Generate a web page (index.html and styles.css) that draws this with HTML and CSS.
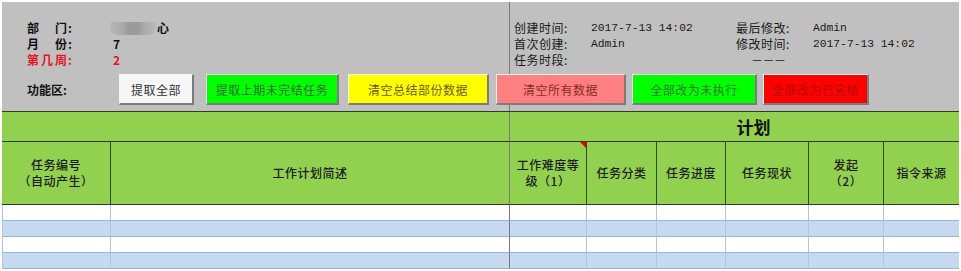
FILE: index.html
```html
<!DOCTYPE html>
<html lang="zh-CN">
<head>
<meta charset="utf-8">
<title>工作计划</title>
<link rel="stylesheet" href="styles.css">
</head>
<body>
<div class="sheet">
  <div class="top">
    <div class="info">
      <div class="meta">
        <div class="row"><span class="k"><span class="kn">部 门</span>:</span><span class="v"><span class="blur"></span>心</span></div>
        <div class="row"><span class="k"><span class="kn">月 份</span>:</span><span class="v">7</span></div>
        <div class="row red"><span class="k"><span class="kn">第几周</span>:</span><span class="v">2</span></div>
      </div>
      <div class="stamp">
        <span class="sk">创建时间:</span><span class="sv mono">2017-7-13 14:02</span><span class="sk">最后修改:</span><span class="sv mono">Admin</span>
        <span class="sk">首次创建:</span><span class="sv mono">Admin</span><span class="sk">修改时间:</span><span class="sv mono">2017-7-13 14:02</span>
        <span class="sk">任务时段:</span><span class="sv"></span><span class="sk dash">－－－</span><span class="sv"></span>
      </div>
    </div>
    <div class="tools">
      <span class="tk">功能区:</span>
      <div class="btn b1">提取全部</div>
      <div class="btn b2">提取上期未完结任务</div>
      <div class="btn b3">清空总结部份数据</div>
      <div class="btn b4">清空所有数据</div>
      <div class="btn b5">全部改为未执行</div>
      <div class="btn b6">全部改为已完结</div>
    </div>
  </div>
  <div class="grid">
    <div class="band band-l"></div>
    <div class="band band-r">计划</div>

    <div class="h">任务编号<br>（自动产生）</div>
    <div class="h div">工作计划简述</div>
    <div class="h note">工作难度等<br>级（1）</div>
    <div class="h">任务分类</div>
    <div class="h">任务进度</div>
    <div class="h">任务现状</div>
    <div class="h">发起<br>（2）</div>
    <div class="h last">指令来源</div>

    <div class="d first"></div><div class="d div"></div><div class="d"></div><div class="d"></div><div class="d"></div><div class="d"></div><div class="d"></div><div class="d last"></div>
    <div class="d b first"></div><div class="d b div"></div><div class="d b"></div><div class="d b"></div><div class="d b"></div><div class="d b"></div><div class="d b"></div><div class="d b last"></div>
    <div class="d first"></div><div class="d div"></div><div class="d"></div><div class="d"></div><div class="d"></div><div class="d"></div><div class="d"></div><div class="d last"></div>
    <div class="d b first"></div><div class="d b div"></div><div class="d b"></div><div class="d b"></div><div class="d b"></div><div class="d b"></div><div class="d b"></div><div class="d b last"></div>
  </div>
</div>
</body>
</html>
```

FILE: styles.css
```css
html, body {
  margin: 0;
  padding: 0;
  background: #fff;
}
body {
  font-family: "Noto Sans CJK SC", "Liberation Sans", sans-serif;
  font-size: 12px;
  color: #111;
}
.sheet {
  margin: 2px 2px 0 2px;
  width: 957px;
}
.top {
  height: 109px;
  box-sizing: border-box;
  padding-top: 18px;
  background:
    linear-gradient(to right, transparent 507px, #7a7a7a 507px, #7a7a7a 508px, transparent 508px),
    #c0c0c0;
}
.info {
  display: flex;
  height: 48px;
  line-height: 16px;
}
.meta {
  width: 512px;
  box-sizing: border-box;
  padding-left: 25px;
}
.row {
  display: flex;
  height: 16px;
  font-weight: 700;
  color: #111;
}
.row.red {
  color: #e8141e;
}
.k {
  width: 86px;
  display: flex;
}
.kn {
  display: inline-block;
  width: 40px;
  text-align: justify;
  text-align-last: justify;
  margin-right: 1px;
}
.v {
  display: flex;
  align-items: center;
}
.blur {
  display: inline-block;
  width: 46px;
  height: 13px;
  margin-left: -3px;
  margin-right: 1px;
  border-radius: 2px 2px 8px 8px;
  background: linear-gradient(to right, #b6b6b6 0, #acacac 25%, #9b9b9b 40%, #9b9b9b 62%, #acacac 75%, #b8b8b8 100%);
}
.stamp {
  display: grid;
  grid-template-columns: 77px 145px 77px 1fr;
  grid-auto-rows: 16px;
  color: #1a1a1a;
}
.sk {
  letter-spacing: 0.5px;
}
.sv.mono {
  font-family: "Liberation Mono", monospace;
  font-size: 11.3px;
}
.dash {
  padding-left: 15px;
  letter-spacing: -0.5px;
}
.tools {
  display: flex;
  align-items: center;
  margin-top: 6px;
  padding-left: 25px;
  height: 31px;
}
.tk {
  width: 92px;
  font-weight: 700;
  color: #111;
}
.btn {
  height: 31px;
  box-sizing: border-box;
  display: flex;
  align-items: center;
  justify-content: center;
  border-style: solid;
  border-width: 1px 2px 2px 1px;
  border-color: #f4f4f4 #7c7c7c #7c7c7c #f4f4f4;
  letter-spacing: 0.5px;
  font-size: 12px;
}
.b1 { width: 75px; background: #f6f6f6; color: #333; }
.b2 { width: 133px; margin-left: 12px; background: #00ff00; color: #2a6e2a; }
.b3 { width: 141px; margin-left: 9px; background: #ffff00; color: #6b5a10; }
.b4 { width: 130px; margin-left: 7px; background: #ff8080; color: #8a2a2a; }
.b5 { width: 125px; margin-left: 6px; background: #00ff00; color: #2a7a2a; }
.b6 { width: 106px; margin-left: 6px; background: #ff0000; color: #b00000; }

.grid {
  display: grid;
  grid-template-columns: 109px 399px 77px 70px 69px 83px 75px 75px;
  border-top: 1px solid #2f3b26;
}
.band {
  height: 30px;
  box-sizing: border-box;
  background: #92d050;
  border-bottom: 1px solid #2f3b26;
}
.band-l {
  grid-column: 1 / 3;
  border-right: 1px solid #7a7a7a;
}
.band-r {
  grid-column: 3 / 9;
  display: flex;
  align-items: center;
  justify-content: center;
  padding-left: 38px;
  font-size: 17px;
  font-weight: 700;
  color: #111;
}
.h {
  height: 63px;
  box-sizing: border-box;
  background: #92d050;
  border-bottom: 1px solid #2f3b26;
  border-right: 1px solid #2f4a1c;
  display: flex;
  align-items: center;
  justify-content: center;
  text-align: center;
  line-height: 16px;
  letter-spacing: 0.5px;
  font-weight: 500;
  color: #1b1b1b;
}
.h.div { border-right-color: #7a7a7a; }
.h.last { border-right: none; }
.h.note { position: relative; }
.h.note::after {
  content: "";
  position: absolute;
  top: 0;
  right: 0;
  border-style: solid;
  border-width: 0 6px 6px 0;
  border-color: transparent #e00000 transparent transparent;
}
.d {
  height: 16px;
  box-sizing: border-box;
  background: #fff;
  border-bottom: 1px solid #9ab5dc;
  border-right: 1px solid #adc6e8;
}
.d.b { background: #c5d9f1; }
.d.first { border-left: 1px solid #adc6e8; }
.d.div { border-right-color: #7a7a7a; }
.d.last { border-right: none; }
```
